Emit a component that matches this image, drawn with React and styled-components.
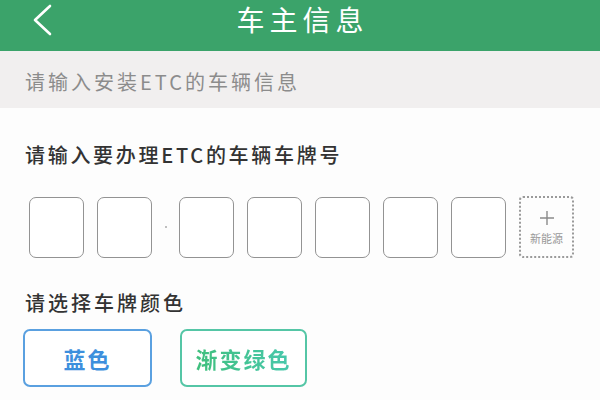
import styled, { createGlobalStyle } from "styled-components";

const GlobalStyle = createGlobalStyle`
  body {
    margin: 0;
    background: #fdfdfd;
    font-family: "Noto Sans CJK SC", "Noto Sans", sans-serif;
  }
`;

const Page = styled.div`
  width: 600px;
  height: 400px;
  overflow: hidden;
  background: #fdfdfd;
`;

const Header = styled.div`
  height: 51px;
  background: #3ba36a;
  display: grid;
  grid-template-columns: 1fr auto 1fr;
  align-items: start;
`;

const Back = styled.button`
  justify-self: start;
  margin: 4px 0 0 30px;
  padding: 0;
  border: none;
  background: none;
  width: 26px;
  height: 32px;
`;

const Title = styled.h1`
  margin: 0;
  padding-top: 2px;
  padding-left: 5px;
  font-size: 28px;
  line-height: 34px;
  font-weight: 400;
  letter-spacing: 5px;
  color: #fff;
`;

const Notice = styled.div`
  height: 57px;
  box-sizing: border-box;
  padding: 3px 0 0 25px;
  display: flex;
  align-items: center;
  background: #f1efef;
  color: #8c8c8c;
  font-size: 20px;
  letter-spacing: 3px;
`;

const Main = styled.div`
  padding: 33px 0 0 25px;
`;

const Label = styled.div`
  font-size: 20px;
  line-height: 28px;
  font-weight: 500;
  color: #333;
  letter-spacing: ${p => p.$spacing || "3px"};
`;

const PlateRow = styled.div`
  display: flex;
  align-items: center;
  gap: 13px;
  margin: 27px 0 31px 4px;
`;

const Cell = styled.div`
  width: 55px;
  height: 61px;
  box-sizing: border-box;
  border: 1.5px solid #939393;
  border-radius: 7px;
  background: #fff;
`;

const Dot = styled.span`
  width: 2px;
  height: 2px;
  border-radius: 1px;
  background: #aaa;
  margin: 0 -0.5px;
`;

const NewEnergy = styled.div`
  width: 55px;
  height: 62px;
  box-sizing: border-box;
  border: 2px dotted #9a9a9a;
  border-radius: 4px;
  display: flex;
  flex-direction: column;
  align-items: center;
  justify-content: center;
  gap: 6px;
`;

const Small = styled.span`
  font-size: 11px;
  line-height: 13px;
  color: #999;
`;

const Colors = styled.div`
  display: flex;
  gap: 28px;
  margin: 12px 0 0 -2px;
`;

const ColorButton = styled.button`
  width: ${p => p.$w}px;
  height: 58px;
  box-sizing: border-box;
  border: 2px solid ${p => p.$border};
  border-radius: 7px;
  background: #fff;
  display: flex;
  align-items: center;
  justify-content: center;
  padding: 0;
  font-family: inherit;
`;

const BlueText = styled.span`
  font-size: 22px;
  font-weight: 700;
  letter-spacing: 2px;
  color: #3d8fdd;
`;

const GradientText = styled.span`
  font-size: 22px;
  font-weight: 700;
  letter-spacing: 2px;
  background: linear-gradient(90deg, #3fbf7c, #48c8ad);
  -webkit-background-clip: text;
  background-clip: text;
  color: transparent;
`;

export default function App() {
  return (
    <Page>
      <GlobalStyle />
      <Header>
        <Back aria-label="返回">
          <svg width="26" height="32" viewBox="0 0 26 32">
            <path d="M20 2 L5 16 L20 30" fill="none" stroke="#fff" strokeWidth="2.6" strokeLinecap="round" strokeLinejoin="round" />
          </svg>
        </Back>
        <Title>车主信息</Title>
        <div />
      </Header>
      <Notice>请输入安装ETC的车辆信息</Notice>
      <Main>
        <Label $spacing="2.7px">请输入要办理ETC的车辆车牌号</Label>
        <PlateRow>
          <Cell />
          <Cell />
          <Dot />
          <Cell />
          <Cell />
          <Cell />
          <Cell />
          <Cell />
          <NewEnergy>
            <svg width="16" height="16" viewBox="0 0 16 16">
              <path d="M8 1 V15 M1 8 H15" stroke="#8a8a8a" strokeWidth="1.4" />
            </svg>
            <Small>新能源</Small>
          </NewEnergy>
        </PlateRow>
        <Label>请选择车牌颜色</Label>
        <Colors>
          <ColorButton $w={129} $border="#5aa0e0">
            <BlueText>蓝色</BlueText>
          </ColorButton>
          <ColorButton $w={127} $border="#55c6a6">
            <GradientText>渐变绿色</GradientText>
          </ColorButton>
        </Colors>
      </Main>
    </Page>
  );
}
